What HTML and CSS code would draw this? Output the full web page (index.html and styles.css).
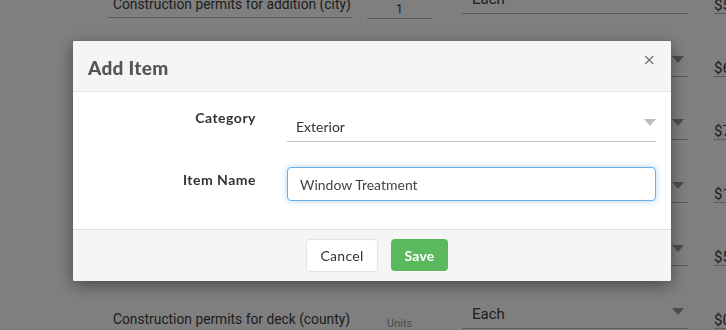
FILE: index.html
```html
<!DOCTYPE html>
<html lang="en">
<head>
  <meta charset="UTF-8">
  <title>Add Item</title>
  <link rel="stylesheet" href="styles.css">
</head>
<body>
  <div class="ItemList">
    <div class="ItemRow">
      <div class="ItemRow-Name">Construction permits for addition (city)</div>
      <div class="ItemRow-Qty">1</div>
      <div class="ItemRow-Unit"><span>Each</span><i class="Caret"></i></div>
      <div class="ItemRow-Price">$500</div>
    </div>
    <div class="ItemRow">
      <div class="ItemRow-Name">Construction permits for addition (county)</div>
      <div class="ItemRow-Qty">1</div>
      <div class="ItemRow-Unit"><span>Each</span><i class="Caret"></i></div>
      <div class="ItemRow-Price">$650</div>
    </div>
    <div class="ItemRow">
      <div class="ItemRow-Name">Construction permits for deck (city)</div>
      <div class="ItemRow-Qty">1</div>
      <div class="ItemRow-Unit"><span>Each</span><i class="Caret"></i></div>
      <div class="ItemRow-Price">$750</div>
    </div>
    <div class="ItemRow">
      <div class="ItemRow-Name">Plumbing permit</div>
      <div class="ItemRow-Qty">1</div>
      <div class="ItemRow-Unit"><span>Each</span><i class="Caret"></i></div>
      <div class="ItemRow-Price">$120</div>
    </div>
    <div class="ItemRow">
      <div class="ItemRow-Name">Electrical permit</div>
      <div class="ItemRow-Qty">1</div>
      <div class="ItemRow-Unit"><span>Each</span><i class="Caret"></i></div>
      <div class="ItemRow-Price">$500</div>
    </div>
    <div class="ItemRow ItemRow--Last">
      <div class="ItemRow-Name">Construction permits for deck (county)</div>
      <div class="ItemRow-Qty ItemRow-Qty--Empty">Units</div>
      <div class="ItemRow-Unit"><span>Each</span><i class="Caret"></i></div>
      <div class="ItemRow-Price">$0</div>
    </div>
  </div>

  <div class="Backdrop">
    <div class="Modal">
      <div class="Modal-Header">
        <h4 class="Modal-Title">Add Item</h4>
        <button class="Modal-Close">&times;</button>
      </div>

      <div class="Modal-Body">
        <div class="Modal-Field">
          <label class="Modal-Label">Category</label>
          <div class="Modal-Select"><span>Exterior</span><i class="Caret Caret--Light"></i></div>
        </div>
        <div class="Modal-Field">
          <label class="Modal-Label Modal-Label--Input">Item Name</label>
          <input class="Modal-Input" type="text" value="Window Treatment">
        </div>
      </div>

      <div class="Modal-Footer">
        <button class="Btn Btn-Cancel">Cancel</button>
        <button class="Btn Btn-Save">Save</button>
      </div>
    </div>
  </div>
</body>
</html>
```

FILE: styles.css
```css
* {
  margin: 0;
  padding: 0;
  box-sizing: border-box;
}

html, body {
  height: 100%;
}

body {
  overflow: hidden;
  background-color: #fff;
  font-family: 'Lato', 'Open Sans', sans-serif;
  color: #333;
}

/* page behind the dialog */
.ItemList {
  height: 100%;
  overflow: hidden;
  font-family: 'Roboto', 'Liberation Sans', sans-serif;
  color: #3a3a3a;
}

.ItemRow {
  display: flex;
  align-items: flex-start;
  height: 63px;
}

.ItemRow:first-child {
  margin-top: -27px;
}

.ItemRow--Last {
  height: 42px;
}

.ItemRow > * {
  flex-shrink: 0;
}

.ItemRow-Name {
  margin-left: 108px;
  width: 244px;
  height: 45px;
  padding: 0 0 4px 5px;
  border-bottom: 1px solid #b4b4b4;
  font-size: 13.8px;
  line-height: 18px;
  white-space: nowrap;
  overflow: hidden;
  display: flex;
  align-items: flex-end;
}

.ItemRow-Qty {
  margin-left: 15px;
  width: 65px;
  height: 46px;
  padding-bottom: 1px;
  border-bottom: 1px solid #b4b4b4;
  font-size: 13px;
  line-height: 16px;
  display: flex;
  align-items: flex-end;
  justify-content: center;
}

.ItemRow-Qty--Empty {
  justify-content: flex-start;
  padding: 0 0 0 20px;
  border-bottom: none;
  height: 42px;
  font-size: 11px;
  line-height: 12px;
  color: #999;
}

.ItemRow-Unit {
  margin-left: 30px;
  width: 226px;
  height: 41px;
  padding: 0 4px 5px 10px;
  border-bottom: 1px solid #b4b4b4;
  font-size: 15px;
  line-height: 18px;
  display: flex;
  align-items: flex-end;
  justify-content: space-between;
}

.ItemRow-Unit .Caret {
  margin-bottom: 8px;
}

.ItemRow-Price {
  margin-left: 26px;
  width: 80px;
  height: 41px;
  border-bottom: 1px solid #b4b4b4;
  font-size: 15px;
  line-height: 14px;
  display: flex;
  align-items: flex-end;
  padding-bottom: 1px;
}

.Caret {
  display: block;
  width: 0;
  height: 0;
  border-left: 6px solid transparent;
  border-right: 6px solid transparent;
  border-top: 7px solid #999;
}

.Caret--Light {
  border-top-color: #bdbdbd;
}

/* dialog */
.Backdrop {
  position: fixed;
  top: 0;
  left: 0;
  right: 0;
  bottom: 0;
  background-color: rgba(0, 0, 0, 0.5);
  padding: 41px 0 0 73px;
}

.Modal {
  width: 598px;
  background-color: #fff;
  border-radius: 2px;
  box-shadow: 0 4px 16px rgba(0, 0, 0, 0.45);
  overflow: hidden;
}

.Modal-Header {
  height: 51px;
  background-color: #f5f5f5;
  border-bottom: 1px solid #e6e6e6;
  padding: 0 15px;
  display: flex;
  align-items: center;
  justify-content: space-between;
}

.Modal-Title {
  font-size: 19px;
  font-weight: 900;
  letter-spacing: 0.3px;
  color: #555;
  padding-top: 2px;
}

.Modal-Close {
  border: none;
  background: none;
  font-family: 'DejaVu Sans', sans-serif;
  font-size: 16px;
  color: #777;
  margin: -14px 0 0 0;
  cursor: pointer;
}

.Modal-Body {
  height: 137px;
  padding-top: 15px;
  display: flex;
  flex-direction: column;
  gap: 25px;
}

.Modal-Field {
  display: flex;
  align-items: flex-start;
}

.Modal-Label {
  width: 183px;
  text-align: right;
  font-size: 14px;
  font-weight: 700;
  letter-spacing: 0.5px;
  line-height: 17px;
  padding-top: 2px;
  color: #333;
}

.Modal-Label--Input {
  padding-top: 4px;
}

.Modal-Select {
  margin-left: 31px;
  width: 369px;
  height: 35px;
  padding: 0 0 6px 9px;
  border-bottom: 1px solid #c4c4c4;
  font-size: 14px;
  line-height: 17px;
  display: flex;
  align-items: flex-end;
  justify-content: space-between;
}

.Modal-Select .Caret {
  margin-bottom: 9px;
}

.Modal-Input {
  margin-left: 31px;
  width: 369px;
  height: 34px;
  padding: 0 12px;
  border: 1px solid #66afe9;
  border-radius: 4px;
  box-shadow: 0 0 6px rgba(102, 175, 233, 0.5);
  outline: none;
  font-family: inherit;
  font-size: 14px;
  color: #444;
}

.Modal-Footer {
  height: 52px;
  background-color: #f5f5f5;
  border-top: 1px solid #e0e0e0;
  display: flex;
  align-items: center;
  justify-content: center;
  gap: 13px;
  padding: 0 0 1px 10px;
}

.Btn {
  border-radius: 4px;
  font-family: inherit;
  font-size: 14px;
  cursor: pointer;
  height: 33px;
}

.Btn-Cancel {
  width: 72px;
  background-color: #fff;
  border: 1px solid #e3e3e3;
  color: #333;
  letter-spacing: 0.3px;
}

.Btn-Save {
  width: 57px;
  height: 32px;
  background-color: #5cb85c;
  border: none;
  color: #fff;
  font-weight: 700;
  letter-spacing: 0.2px;
}
```
